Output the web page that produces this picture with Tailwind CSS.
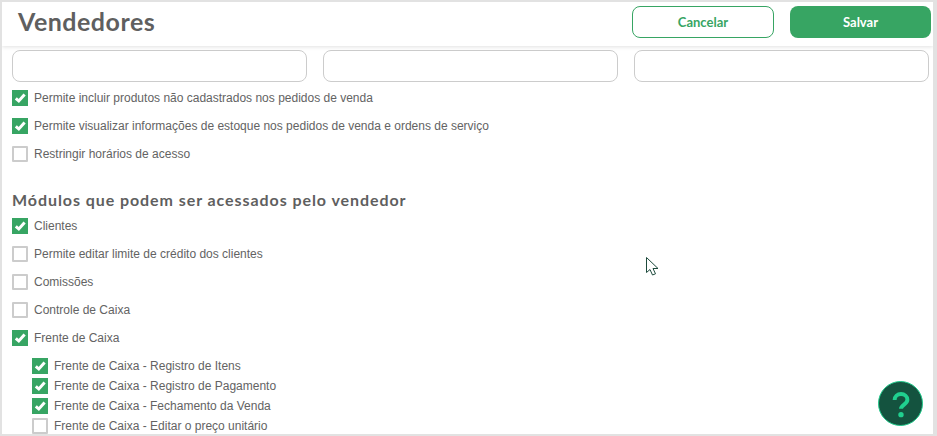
<!DOCTYPE html>
<html lang="pt-BR">
<head>
<meta charset="utf-8">
<script src="https://cdn.jsdelivr.net/npm/@tailwindcss/browser@4"></script>
</head>
<body class="m-0 bg-white">
<div class="relative w-[937px] h-[436px] overflow-hidden bg-white border-t-2 border-l-2 border-b-2 border-r-[4px] border-[#e2e2e2] font-['Liberation_Sans',sans-serif] text-[#636363] text-[12px]">
  <header class="h-[44px] flex items-center justify-between pl-[16px] pr-[2px] pb-[4px] bg-white shadow-[0_1px_4px_rgba(0,0,0,0.12)] relative">
    <h1 class="font-['Lato',sans-serif] font-bold text-[25px] text-[#5f5f5f] tracking-[0.5px]">Vendedores</h1>
    <div class="flex gap-[16px]">
      <button class="w-[142px] h-[32px] pt-[2px] rounded-[8px] border border-[#37a563] bg-white text-[#37a563] font-['Lato',sans-serif] font-bold text-[13px]">Cancelar</button>
      <button class="w-[141px] h-[32px] pt-[2px] rounded-[8px] bg-[#37a563] text-white font-['Lato',sans-serif] font-bold text-[13px]">Salvar</button>
    </div>
  </header>
  <main class="pl-[10px] pr-[6px] pt-[4px]">
    <div class="grid grid-cols-3 gap-[16px] w-[917px]">
      <div class="h-[32px] rounded-[8px] border border-[#cccccc]"></div>
      <div class="h-[32px] rounded-[8px] border border-[#cccccc]"></div>
      <div class="h-[32px] rounded-[8px] border border-[#cccccc]"></div>
    </div>
    <div class="mt-[2px]">
      <label class="h-[28px] flex items-center gap-[6px]"><span class="w-4 h-4 bg-[#37a563] flex items-center justify-center"><svg viewBox="0 0 16 16" class="w-4 h-4"><path d="M3.8 8.3 6.8 11 12.6 4.6" fill="none" stroke="#fff" stroke-width="3"/></svg></span>Permite incluir produtos não cadastrados nos pedidos de venda</label>
      <label class="h-[28px] flex items-center gap-[6px]"><span class="w-4 h-4 bg-[#37a563] flex items-center justify-center"><svg viewBox="0 0 16 16" class="w-4 h-4"><path d="M3.8 8.3 6.8 11 12.6 4.6" fill="none" stroke="#fff" stroke-width="3"/></svg></span>Permite visualizar informações de estoque nos pedidos de venda e ordens de serviço</label>
      <label class="h-[28px] flex items-center gap-[6px]"><span class="w-4 h-4 border-2 border-[#cccccc] rounded-[1px]"></span>Restringir horários de acesso</label>
    </div>
    <h2 class="font-['Lato',sans-serif] font-bold text-[16px] text-[#5f5f5f] tracking-[0.93px] mt-[22px] h-[20px] leading-[20px]">Módulos que podem ser acessados pelo vendedor</h2>
    <div class="mt-[2px]">
      <label class="h-[28px] flex items-center gap-[6px]"><span class="w-4 h-4 bg-[#37a563] flex items-center justify-center"><svg viewBox="0 0 16 16" class="w-4 h-4"><path d="M3.8 8.3 6.8 11 12.6 4.6" fill="none" stroke="#fff" stroke-width="3"/></svg></span>Clientes</label>
      <label class="h-[28px] flex items-center gap-[6px]"><span class="w-4 h-4 border-2 border-[#cccccc] rounded-[1px]"></span>Permite editar limite de crédito dos clientes</label>
      <label class="h-[28px] flex items-center gap-[6px]"><span class="w-4 h-4 border-2 border-[#cccccc] rounded-[1px]"></span>Comissões</label>
      <label class="h-[28px] flex items-center gap-[6px]"><span class="w-4 h-4 border-2 border-[#cccccc] rounded-[1px]"></span>Controle de Caixa</label>
      <label class="h-[28px] flex items-center gap-[6px]"><span class="w-4 h-4 bg-[#37a563] flex items-center justify-center"><svg viewBox="0 0 16 16" class="w-4 h-4"><path d="M3.8 8.3 6.8 11 12.6 4.6" fill="none" stroke="#fff" stroke-width="3"/></svg></span>Frente de Caixa</label>
    </div>
    <div class="pl-[20px] mt-[4px]">
      <label class="h-[20px] flex items-center gap-[6px]"><span class="w-4 h-4 bg-[#37a563] flex items-center justify-center"><svg viewBox="0 0 16 16" class="w-4 h-4"><path d="M3.8 8.3 6.8 11 12.6 4.6" fill="none" stroke="#fff" stroke-width="3"/></svg></span>Frente de Caixa - Registro de Itens</label>
      <label class="h-[20px] flex items-center gap-[6px]"><span class="w-4 h-4 bg-[#37a563] flex items-center justify-center"><svg viewBox="0 0 16 16" class="w-4 h-4"><path d="M3.8 8.3 6.8 11 12.6 4.6" fill="none" stroke="#fff" stroke-width="3"/></svg></span>Frente de Caixa - Registro de Pagamento</label>
      <label class="h-[20px] flex items-center gap-[6px]"><span class="w-4 h-4 bg-[#37a563] flex items-center justify-center"><svg viewBox="0 0 16 16" class="w-4 h-4"><path d="M3.8 8.3 6.8 11 12.6 4.6" fill="none" stroke="#fff" stroke-width="3"/></svg></span>Frente de Caixa - Fechamento da Venda</label>
      <label class="h-[20px] flex items-center gap-[6px]"><span class="w-4 h-4 border-2 border-[#cccccc] rounded-[1px]"></span>Frente de Caixa - Editar o preço unitário</label>
    </div>
  </main>
  <button class="absolute left-[876px] top-[379px] w-[45px] h-[45px] rounded-full bg-[#14533f] border border-[#20c98a] flex items-center justify-center">
    <svg viewBox="0 0 24 24" class="w-[34px] h-[34px]"><path d="M7.5 9.2C7.5 6.6 9.5 5 12 5s4.5 1.6 4.5 4c0 3.3-4.5 3.4-4.5 6.4" fill="none" stroke="#20d08f" stroke-width="2.8"/><circle cx="12" cy="19.5" r="1.9" fill="#20d08f"/></svg>
  </button>
  <svg class="absolute left-[644px] top-[255px]" width="13" height="20" viewBox="0 0 13 20"><path d="M.5.5V15.5L4 12.5 6.5 18 9.5 16.8 7 11.5H12Z" fill="#fff" stroke="#1d4a3c" stroke-width="1"/></svg>
</div>
</body>
</html>
